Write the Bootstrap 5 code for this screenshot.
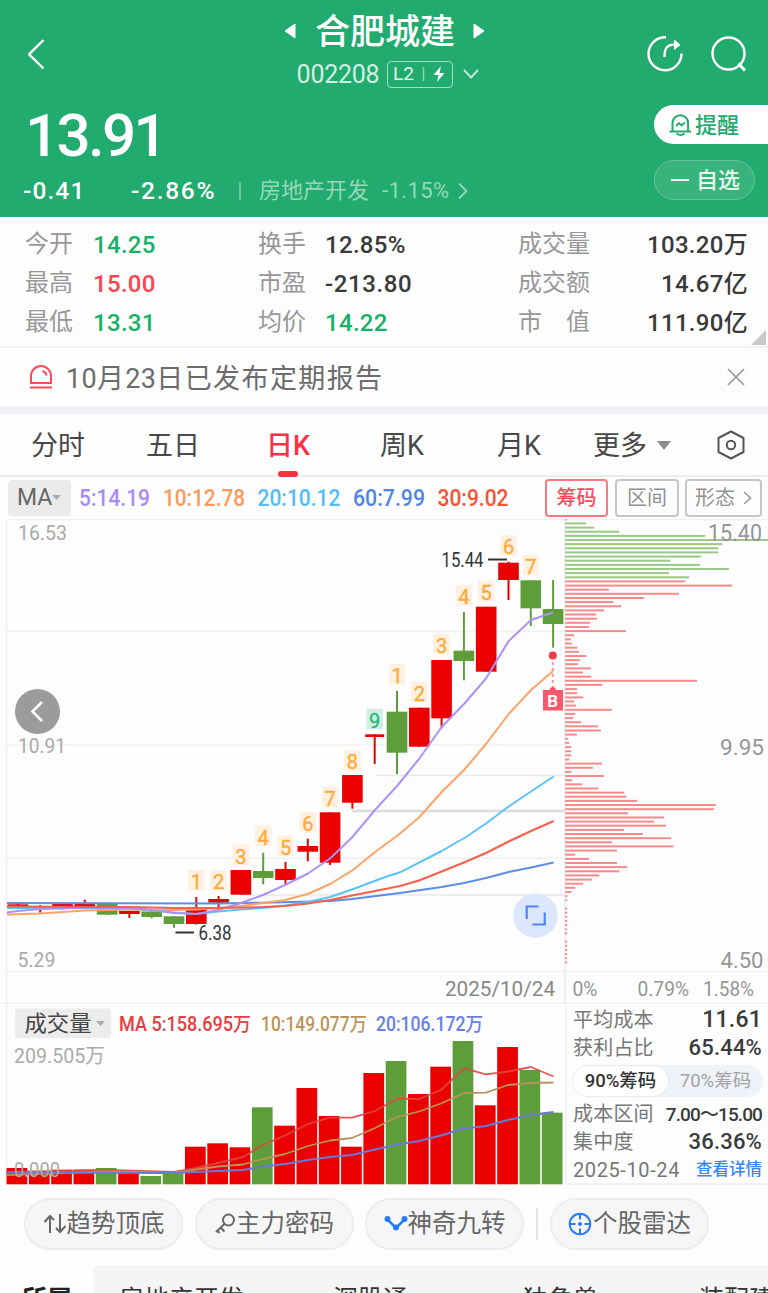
<!DOCTYPE html>
<html lang="zh-CN">
<head>
<meta charset="utf-8">
<meta name="viewport" content="width=device-width, initial-scale=1">
<title>合肥城建 002208</title>
<link rel="stylesheet" href="https://cdn.jsdelivr.net/npm/bootstrap@5.3.0/dist/css/bootstrap.min.css">
<style>
  body{font-family:Roboto,"Noto Sans CJK SC",sans-serif;background:#fdfdfd;color:#444;overflow:hidden;height:1293px;line-height:1.2;font-size:24px;white-space:nowrap}
  svg{display:block;flex:none}
  .fw-mid{font-weight:500}
  .top-area{background:#21ab6e;height:217px;color:#fff}
  .top-bar{height:104px}
  .side-col{width:150px}
  .stock-name{font-size:35px;line-height:40px;font-weight:500;padding-top:3px}
  .stock-code{font-size:25px;letter-spacing:-.25px;color:#d3eee2;line-height:26px;padding-top:2px}
  .level-tag{border:1.5px solid #a5dcc4;border-radius:4px;width:66px;height:27px;font-size:19px;color:#e4f5ed}
  .price-now{font-size:60px;line-height:62px;font-weight:500;letter-spacing:-2.6px}
  .change-row{height:26px;font-size:24.5px}
  .sector{color:#97d7ba;font-size:22px}
  .remind{width:114px;height:39px;border-radius:20px 0 0 20px;background:#fff;color:#21ab6e;font-size:22px}
  .remind span,.selfpick b{font-weight:500;padding-top:3px}
  .selfpick{width:101px;height:40px;border-radius:20px;border:1.5px solid #66c29b;background:#38b37c;font-size:22px;color:#e9f7f0}
  .quotes{display:grid;grid-template-columns:68px 165px 67px 193px 1fr;grid-auto-rows:39.3px;height:131px;padding:8px 20px 0 25px;align-items:center;border-bottom:2px solid #f2f2f4}
  .quotes dt{font-weight:400;color:#979797;font-size:24px;margin-top:-1px}
  .quotes dd{margin:0;padding-top:1px;font-weight:500;color:#3a3a3a;letter-spacing:.3px}
  .quotes dd.up{color:#fb4450}.quotes dd.down{color:#18b068}
  .notice{height:58px;font-size:27px;color:#6c6c6c;padding:0 22px 0 29px}
  .gap-band{height:8px;background:#f1f2f8}
  .period-tabs{height:63px;border-bottom:2px solid #ececef;font-size:27px;color:#484848}
  .period-tabs .nav-link{color:inherit;padding:4px 0 0}
  .period-tabs .active{color:#fb3243;font-weight:500;position:relative}
  .period-tabs .active::after{content:"";position:absolute;left:50%;margin-left:-10px;bottom:-14px;width:20px;height:6px;border-radius:3px;background:#fb3243}
  .ma-row{height:42px;padding:0 6px 0 8px;font-size:22.5px}
  .ma-pick{width:63px;height:36px;border-radius:4px;background:#ebebeb;color:#666;font-size:23px}
  .tool-btn{height:38px;border:2px solid #c6c6c6;border-radius:4px;color:#929292;font-size:20px}
  .tool-btn.on{color:#fb4a5a;border-color:#fb7883}
  .chip-panel{width:203px;height:181px;border-left:2px solid #f2f2f4;border-bottom:2px solid #f2f2f4;padding:0 6px 0 6px;font-size:20px;letter-spacing:.2px;color:#777}
  .chip-panel .rowline{height:28px}
  .chip-panel b{font-weight:500;color:#3a3a3a;font-size:23px}
  .chip-switch{height:32px;border-radius:16px;background:#eff3f9;font-size:18.5px;letter-spacing:0;color:#a2a2a2;width:190px}
  .chip-switch .on{width:95px;height:30px;border-radius:15px;background:#fff;color:#333;box-shadow:0 0 3px #dde3ec;font-weight:500}
  .strategy{height:80px;padding:0 0 3px 24px}
  .strategy .pill{width:159px;height:52px;border:2px solid #ededed;border-radius:26px;background:#f6f6f6;color:#666;font-size:24.5px}
  .belong{height:28px;overflow:hidden}
  .belong-head{width:93px;padding-left:22px;font-size:25px;color:#222;flex:none}
  .belong-list{background:#f5f5f5;border-radius:8px 0 0 0;font-size:25px;color:#333;overflow:hidden}
  .belong-list span,.belong-head span{display:block;flex:none;padding-top:16px;line-height:38px}
</style>
</head>
<body>
<header class="top-area">
  <div class="top-bar d-flex">
    <div class="side-col d-flex align-items-center ps-4"><svg width="24" height="34" class="ms-1" style="margin-top:4px" viewBox="0 0 24 34"><path d="M15.500 3 1 17.300 15.500 31.500" fill="none" stroke="#fff" stroke-width="2.400"/></svg></div>
    <div class="flex-grow-1 d-flex flex-column align-items-center">
      <div class="d-flex align-items-center" style="margin:10px 0 0 1px;height:42px">
        <svg width="12" height="16" viewBox="0 0 12 16"><path d="M11 1v14L1 8z" fill="#fff" stroke="#fff" stroke-linejoin="round"/></svg>
        <span class="stock-name" style="margin:0 18px 0 19px">合肥城建</span>
        <svg width="12" height="16" viewBox="0 0 12 16"><path d="M1 1v14l10-7z" fill="#fff" stroke="#fff" stroke-linejoin="round"/></svg>
      </div>
      <div class="d-flex align-items-center" style="margin:8px 0 0 8px;height:28px">
        <span class="stock-code">002208</span>
        <span class="level-tag d-flex align-items-center justify-content-center ms-2">L2<svg width="34" height="18" viewBox="0 0 34 18"><path d="M9.500 2v14" stroke="#8fd3b5" stroke-width="1.500"/><path d="M27 1 19.500 10h5l-1.500 7 7.500-9h-5z" fill="#fff"/></svg></span>
        <svg width="16" height="12" viewBox="0 0 16 12" style="margin-left:10px"><path d="m1 2 7 7.500L15 2" fill="none" stroke="#c2e7d6" stroke-width="2"/></svg>
      </div>
    </div>
    <div class="side-col d-flex align-items-center justify-content-end" style="padding:4px 20px 0 0;gap:26px">
      <svg width="38" height="38" viewBox="0 0 38 38" fill="none" stroke="#fff" stroke-width="2.400"><path d="M20 2.300A16.500 16.500 0 1 0 35.500 18.500"/><path d="M18.500 22c0-8 2-12 9-12.500h4"/><path d="m28.500 5.300 5.500 4.500-5.500 4.500z" fill="#fff" stroke-width="1"/></svg>
      <svg width="38" height="38" viewBox="0 0 38 38" fill="none" stroke="#fff" stroke-width="2.400"><circle cx="18.500" cy="18.500" r="16"/><path d="m28.500 28.500 6.500 7" stroke-width="3"/></svg>
    </div>
  </div>
  <div class="d-flex justify-content-between">
    <div>
      <div class="price-now" style="padding:1px 0 0 25px">13.91</div>
      <div class="change-row d-flex align-items-center" style="margin-top:11px;padding-left:23px">
        <span class="fw-mid" style="width:108px;letter-spacing:1.100px">-0.41</span><span class="fw-mid" style="width:108px;letter-spacing:1.700px">-2.86%</span>
        <span style="width:2px;height:18px;background:#6cc59f;margin-right:18px"></span>
        <span class="sector">房地产开发</span><span class="sector" style="margin-left:13px;letter-spacing:.4px">-1.15%</span>
        <svg width="10" height="18" viewBox="0 0 10 18" style="margin-left:8px"><path d="m1 1.500 7.500 7.500L1 16.500" fill="none" stroke="#97d7ba" stroke-width="1.800"/></svg>
      </div>
    </div>
    <div style="width:114px;padding-top:1px">
      <div class="remind d-flex align-items-center" style="padding-left:14px">
        <svg width="24" height="24" viewBox="0 0 24 24" fill="none" stroke="#21ab6e" stroke-width="2"><path d="M4.500 18V10a7.800 7.800 0 0 1 15.600 0v8"/><path d="M1.500 18.500h21.500"/><path d="M8.500 20.500q4 3 8 0"/><path d="m8 13 3-3 2.500 2.500L17 9.500" stroke-width="1.800"/></svg>
        <span style="margin-left:3px">提醒</span></div>
      <div class="selfpick d-flex align-items-center" style="margin-top:16px;padding-left:16px"><span style="width:18px;height:2px;background:#e9f7f0;margin-right:7px"></span><b>自选</b></div>
    </div>
  </div>
</header>

<dl class="quotes mb-0">
  <dt>今开</dt><dd class="down">14.25</dd><dt>换手</dt><dd>12.85%</dd><div class="d-flex justify-content-between align-items-center"><dt>成交量</dt><dd>103.20万</dd></div>
  <dt>最高</dt><dd class="up">15.00</dd><dt>市盈</dt><dd style="letter-spacing:.6px">-213.80</dd><div class="d-flex justify-content-between align-items-center"><dt>成交额</dt><dd>14.67亿</dd></div>
  <dt>最低</dt><dd class="down">13.31</dd><dt>均价</dt><dd class="down">14.22</dd><div class="d-flex justify-content-between align-items-center position-relative"><dt>市　值</dt><dd>111.90亿</dd><svg class="position-absolute" style="right:-18px;bottom:-7px" width="15" height="15"><path d="M15 0v15H0z" fill="#c9c9c9"/></svg></div>
</dl>

<section class="notice d-flex align-items-center">
  <svg width="24" height="26" viewBox="0 0 24 26" fill="none" stroke="#fb4a5a" stroke-width="2"><path d="M2 19V12a10 10 0 0 1 20 0v7z"/><path d="M1 23.500h22"/><path d="M13.500 7q3.500 1 4 4.500"/></svg>
  <span class="flex-grow-1" style="margin-left:13px;padding-top:4px;letter-spacing:1.400px"><span style="letter-spacing:.3px">10</span>月<span style="letter-spacing:.3px">23</span>日已发布定期报告</span>
  <svg width="20" height="20" viewBox="0 0 20 20"><path d="m2 2 16 16M18 2 2 18" stroke="#999" stroke-width="1.700"/></svg>
</section>
<div class="gap-band"></div>

<nav class="nav period-tabs flex-nowrap align-items-center">
  <a class="nav-link" style="margin-left:31px">分时</a>
  <a class="nav-link" style="margin-left:61px">五日</a>
  <a class="nav-link active" style="margin-left:66px">日K</a>
  <a class="nav-link" style="margin-left:70px">周K</a>
  <a class="nav-link" style="margin-left:73px">月K</a>
  <a class="nav-link d-flex align-items-center" style="margin-left:52px">更多<svg width="14" height="10" style="margin-left:10px"><path d="M0 0h14L7 9z" fill="#8d8d8d"/></svg></a>
  <svg width="28" height="30" viewBox="0 0 28 30" fill="none" stroke="#555" stroke-width="2" style="margin-left:46px"><path d="M14 1.500 26.500 8v14L14 28.500 1.500 22V8z" stroke-linejoin="round"/><circle cx="14" cy="15" r="4.200"/></svg>
</nav>

<div class="ma-row d-flex align-items-center fw-mid">
  <span class="ma-pick d-flex align-items-center fw-normal" style="padding-left:9px">MA<svg width="9" height="6"><path d="M0 0h9L4.500 5z" fill="#aaa"/></svg></span>
  <svg id="ma-legend" width="474" height="36" viewBox="71 480 474 36"></svg>
  <span class="tool-btn on d-flex align-items-center justify-content-center" style="width:63px">筹码</span>
  <span class="tool-btn d-flex align-items-center justify-content-center fw-normal" style="width:64px;margin-left:7px">区间</span>
  <span class="tool-btn d-flex align-items-center justify-content-center fw-normal" style="width:77px;margin-left:6px">形态<svg width="9" height="14" viewBox="0 0 9 14" style="margin-left:8px"><path d="m1 1 6.500 6L1 13" fill="none" stroke="#999" stroke-width="1.600"/></svg></span>
</div>

<svg id="kline" width="768" height="485" viewBox="0 519 768 485"></svg>
<div class="d-flex">
  <div style="width:565px;height:181px">
    <svg id="volume" width="565" height="181" viewBox="0 1004 565 181"></svg>
  </div>
  <aside class="chip-panel">
    <div class="rowline d-flex justify-content-between align-items-center" style="margin-top:2px"><span>平均成本</span><b>11.61</b></div>
    <div class="rowline d-flex justify-content-between align-items-center"><span>获利占比</span><b style="font-size:22px">65.44%</b></div>
    <div class="chip-switch d-flex align-items-center" style="margin:3px 0 3px"><span class="on d-flex align-items-center justify-content-center">90%筹码</span><span class="flex-grow-1 text-center">70%筹码</span></div>
    <div class="rowline d-flex justify-content-between align-items-center"><span>成本区间</span><b style="font-size:19px;letter-spacing:-.9px;padding-top:2px">7.00～15.00</b></div>
    <div class="rowline d-flex justify-content-between align-items-center"><span>集中度</span><b style="font-size:22px">36.36%</b></div>
    <div class="rowline d-flex justify-content-between align-items-center"><span style="letter-spacing:.6px">2025-10-24</span><span style="font-size:16.500px;letter-spacing:0;color:#3486fa" class="fw-mid">查看详情</span></div>
  </aside>
</div>

<div class="strategy d-flex align-items-center">
  <span class="pill d-flex align-items-center justify-content-center"><svg width="24" height="22" viewBox="0 0 24 22" fill="none" stroke="#666" stroke-width="2"><path d="M7 20V3M1.500 9 7 3l4 4M17 1v18M13 15l4 4 5.500-6"/></svg>趋势顶底</span>
  <span class="pill d-flex align-items-center justify-content-center" style="margin-left:11.500px"><svg width="22" height="22" viewBox="0 0 22 22" fill="none" stroke="#666" stroke-width="2"><circle cx="14.500" cy="7" r="5.500"/><path d="M10.500 11 2 19M6.500 14.500l4 4M3 17.500l2.500 2.500"/></svg>主力密码</span>
  <span class="pill d-flex align-items-center justify-content-center" style="margin-left:11.500px"><svg width="24" height="20" viewBox="0 0 24 20"><path d="m3 5 9 9 9-9" fill="none" stroke="#2a7bfa" stroke-width="2.500"/><g fill="#2a7bfa"><circle cx="3.500" cy="5" r="3"/><circle cx="12" cy="13.500" r="3"/><circle cx="20.500" cy="5" r="3"/></g></svg>神奇九转</span>
  <span style="width:2px;height:32px;background:#e6e6e6;margin:0 12px 0 12px"></span>
  <span class="pill d-flex align-items-center justify-content-center"><svg width="25" height="24" viewBox="0 0 25 24" fill="none" stroke="#2a7bfa" stroke-width="2"><circle cx="12" cy="12" r="10.300"/><path d="M12 2v5.500M12 16.500V22M2 12h5.500M16.500 12H22"/><circle cx="12" cy="12" r="1.500" fill="#2a7bfa" stroke-width="1"/></svg>个股雷达</span>
</div>
<div class="belong d-flex">
  <div class="belong-head fw-bold"><span>所属</span></div>
  <div class="belong-list flex-grow-1 d-flex" style="padding-left:26px">
    <span style="width:214px">房地产开发</span><span style="width:190px">深股通</span><span style="width:176px">独角兽</span><span>装配建筑</span>
  </div>
</div>

<script>
const RED='#eb0000', GREEN='#5d9e3a';
const step=22.3, cx=i=>17.9+step*i;
const rect=(x,y,w,h,f,extra='')=>`<rect x="${x}" y="${y}" width="${w}" height="${h}" fill="${f}" ${extra}/>`;
const line=(x1,y1,x2,y2,c,w=1.5,extra='')=>`<path d="M${x1} ${y1}L${x2} ${y2}" stroke="${c}" stroke-width="${w}" ${extra}/>`;
const text=(s,x,y,size,len,fill,weight=400)=>`<text x="${x}" y="${y}" font-size="${size}" textLength="${len}" lengthAdjust="spacingAndGlyphs" fill="${fill}" font-weight="${weight}">${s}</text>`;
const poly=(pts,c,w=2,o=1)=>`<polyline points="${pts}" fill="none" stroke="${c}" stroke-width="${w}" stroke-linejoin="round" opacity="${o}"/>`;

document.getElementById('ma-legend').innerHTML=
  text('5:14.19',79,505.5,23,71,'#a98af5',500)+text('10:12.78',163,505.5,23,82,'#fb9a5c',500)+
  text('20:10.12',257.500,505.5,23,83,'#54bdf8',500)+text('60:7.99',353,505.5,23,72,'#4f86e4',500)+text('30:9.02',437.500,505.5,23,71,'#f65335',500);

/* candle: [body top, body bottom, high, low, rising] */
const candles=[[904.3,907.3,902,908,1],[906,907.5,905,912.7,1],[903.3,906.7,903,909.5,1],[904,906,899.7,908.5,1],[904,914.7,904,915,0],[911,914,911,918,1],[911.5,917,911,918.3,0],[916.3,924,916,927.7,0],[907.7,924,897,924.5,1],[899,902.7,896,910.7,1],[870,894.7,870,894.7,1],[871,878,852.7,884.3,0],[869,880,862,885.3,1],[846,851.7,838.7,861.3,1],[812.3,862.7,812.3,865,1],[775,802.7,775,808.7,1],[734.3,737,734.3,764,1],[711.7,752.7,690.7,774.3,0],[707.7,746.7,707.7,746.7,1],[660,718.3,660,728.3,1],[650.7,661,612,680.3,0],[606.7,671.7,606.7,671.7,1],[562.7,580,561.7,600,1],[580.3,608.3,580.3,626,0],[609,624,580,647.7,0]];
/* nine-turn marks: [candle index, digit, top] */
const marks=[[8,1,870],[9,2,870],[10,3,844.5],[11,4,825.7],[12,5,835.5],[13,6,812],[14,7,786.7],[15,8,749.7],[16,9,708.7],[17,1,664],[18,2,681.7],[19,3,634],[20,4,585],[21,5,580.7],[22,6,535.3],[23,7,554.7]];
const chips=[2,21,29,54,140,203,157,153,153,135.7,105,135,163.7,103.7,124,120,167,43.7,113.7,78.7,48,56,39,31,31.7,25,24,60.7,9,5.7,6.7,12,14,21,14.7,12.7,25.7,17.7,26,131.7,37,12,12,18,9,11,46.7,10,8,16,33,35.7,11.7,3,4,6,6,6,4,36.7,27.7,6,39,7,17,33,59,61,72,150.7,148.7,62.7,99,89,100.7,59,77.7,106,46.7,108,51.7,10,23.7,51.7,62,54,34,26.7,17.7,10,6,2,2,0,2,2,2,2,2,2,2,0,2,2,2,2,2,2];
let k='';
[519.5,631.5,745,858.3].forEach(y=>k+=line(6,y,565,y,'#f0f0f2'));
k+=line(6,971.5,768,971.5,'#f0f0f2')+line(565,519.5,768,519.5,'#f0f0f2')+line(6.5,519,6.5,1005,'#f0f0f2')+line(565,519,565,1005,'#efeff1',2);
k+=line(375,775.5,565,775.5,'#e9e9ea')+line(352,811,565,811,'#dcdcdd',2.5)+line(243,895,565,895,'#e9e9ea');
chips.forEach((w,i)=>{if(w)k+=rect(565.2,(518.3+i*4.141).toFixed(1),w,2,i<15?'#9cc887':'#f58a8d')});
k+=text('15.40',708,541,23,54,'#969696')+text('9.95',720,754.5,22,44,'#969696')+text('4.50',720.500,967.5,22,43,'#969696');
k+=text('16.53',18,540,20,49,'#aaa')+text('10.91',18,753,20,48,'#aaa')+text('5.29',17.500,966.5,20,38,'#aaa');
candles.forEach(([t,b,h,l,r],i)=>{const c=r?RED:GREEN;
  k+=line(cx(i),h,cx(i),l,c,2)+rect((i==16?cx(i)-9.5:cx(i)-10.3).toFixed(1),t,i==16?19:20.6,(b-t).toFixed(1),c)});
marks.forEach(([i,d,y])=>{const n=d==9;
  k+=rect(cx(i)-8.2,y,16.4,20.6,n?'#cfefe0':'#fff0e1')+`<text x="${cx(i)}" y="${y+19}" text-anchor="middle" font-size="20" fill="${n?'#2bb37b':'#fda937'}" stroke="${n?'#2bb37b':'#fda937'}" stroke-width=".3">${d}</text>`});
k+=poly('7,903 220,903.500 263,902.700 330,901 352,899 384,895 400,893 441.700,887 464,883 486,878 508.700,872 531,867.500 553.700,862.500','#5a8ee8')
 +poly('7,914.500 40,913.500 85,910.500 129,909.500 174,910 196,909.500 218,908 241,906 263,903 285,900 308,894 330,884 352,870.700 375,852 397,836 419,817.500 441.700,792 464,770 486,744 508.700,714 531,690 553,671','#fba468')
 +poly('7,908 85,908 130,908.500 174,912.500 196,914 218,911.500 241,909.500 263,908 285,905.500 308,902 330,897 352,889.500 384,877.500 400,872.300 441.700,851 466,837 486,823.500 508.700,806.500 531,791.500 553.700,776.500','#5cc3fa')
 +poly('7,912.500 18,911 40,909 62,908.500 85,907.500 129,908 152,910 174,913 196,914 218,910 241,903 263,895 285,885 308,873.500 330,858.500 352,837.500 375,810 397,786 419,759 441.700,727 464,704 486,678.500 508.700,641 531,620 553,612.500','#ad92f5')
 +poly('7,906.500 85,907 129,907 174,908 218,908 263,907 285,906 308,903.500 330,900 352,895.500 384,889.300 400,886 419,880.500 441.700,871.500 464,862.500 486,853 508.700,841.500 531,831 553.700,821','#f4604a');
k+=text('15.44',441.500,566.500,20,42,'#333')+line(488,559.5,507,559.5,'#333',2)+line(175.500,932.5,194,932.5,'#333',2)+text('6.38',198.500,940,20,33,'#333');
k+=`<circle cx="552.800" cy="655.500" r="4" fill="#f03b48"/>`+line(552.8,662,552.8,688,'#f59aa2',2,'stroke-dasharray="3 3"')+`<circle cx="552.800" cy="690" r="3" fill="#f9596a"/>`+rect(543,690,20,20.5,'#f9596a')+`<text x="552.800" y="706.500" text-anchor="middle" font-size="17" font-weight="700" fill="#fff">B</text>`;
k+=`<circle cx="37.500" cy="711.500" r="22.500" fill="#9b9b9b"/><path d="m42 702-9.500 9.500 9.500 9.500" fill="none" stroke="#fff" stroke-width="2.600"/>`;
k+=`<circle cx="535.500" cy="915.500" r="22.300" fill="#dce7fd"/><path d="M538.500 906.500H526.700V919M532.500 924.500H544.700V912.500" fill="none" stroke="#4a86fb" stroke-width="2.200"/>`;
k+=text('2025/10/24',445,996,20.5,110,'#878787')+text('0%',572.500,996,20,25,'#969696')+text('0.79%',637.500,996,20,51.5,'#969696')+text('1.58%',703,996,20,51,'#969696');
k+=line(0,1003.5,768,1003.5,'#f0f0f2');
document.getElementById('kline').innerHTML=k;

const vols=[[1168,1],[1172,1],[1169.7,1],[1169.7,1],[1168,0],[1172.3,1],[1176,0],[1173.3,0],[1146.7,1],[1143.3,1],[1147.3,1],[1107.3,0],[1125.7,1],[1088,1],[1116,1],[1146.7,1],[1073,1],[1061,0],[1094,1],[1066.7,1],[1041,0],[1105.3,1],[1047,1],[1070,0],[1112.7,0]];
let v=line(6.5,1004,6.5,1184,'#f0f0f2')+rect(15,1008.5,96,29.5,'#ececec','rx="3"')+text('成交量',24.500,1031,22,67,'#444')+'<path d="M96 1021h9l-4.500 5z" fill="#aaa"/>'
 +text('MA 5:158.695万',119,1031,19.5,132,'#e73c40',500)+text('10:149.077万',261,1031,19.500,106,'#bb9558',500)+text('20:106.172万',376,1031,19.500,107,'#6680ea',500)+text('209.505万',14,1063,20,91,'#aaa');
vols.forEach(([t,r],i)=>v+=rect((cx(i)-11.3).toFixed(1),t,20.7,(1184.3-t).toFixed(1),r?RED:GREEN));
v+=poly('6,1172 62,1171 107,1170 174,1172 196,1168 218,1163 243,1157 263,1145 285,1135.500 308,1124 330,1117.700 352,1117.700 375,1111 397,1098.700 419,1099 441,1090 464,1068.300 486,1074.300 508,1071.500 531,1067 553.500,1076.500','#e04545',1.8,.9)
 +poly('6,1175 107,1171.500 174,1173 196,1169.500 218,1166.500 243,1164.500 263,1159 285,1154 308,1146 330,1140.500 352,1138 375,1128 397,1117 419,1111.500 441,1103.500 464,1093 486,1092.700 508,1085 531,1083 553.500,1082.500','#b9935d',1.8)
 +poly('6,1172.500 174,1173 196,1172 218,1171 243,1170 263,1166.500 285,1164 308,1160 330,1157 352,1155 375,1149.500 397,1144.500 419,1141 441,1135.500 464,1128.500 486,1126 508,1120 531,1115 553.500,1112','#6a78d8')
 +text('0.000',14,1177,20,46,'#aaa');
document.getElementById('volume').innerHTML=v;
</script>
<script src="https://cdn.jsdelivr.net/npm/bootstrap@5.3.0/dist/js/bootstrap.bundle.min.js"></script>
</body>
</html>
